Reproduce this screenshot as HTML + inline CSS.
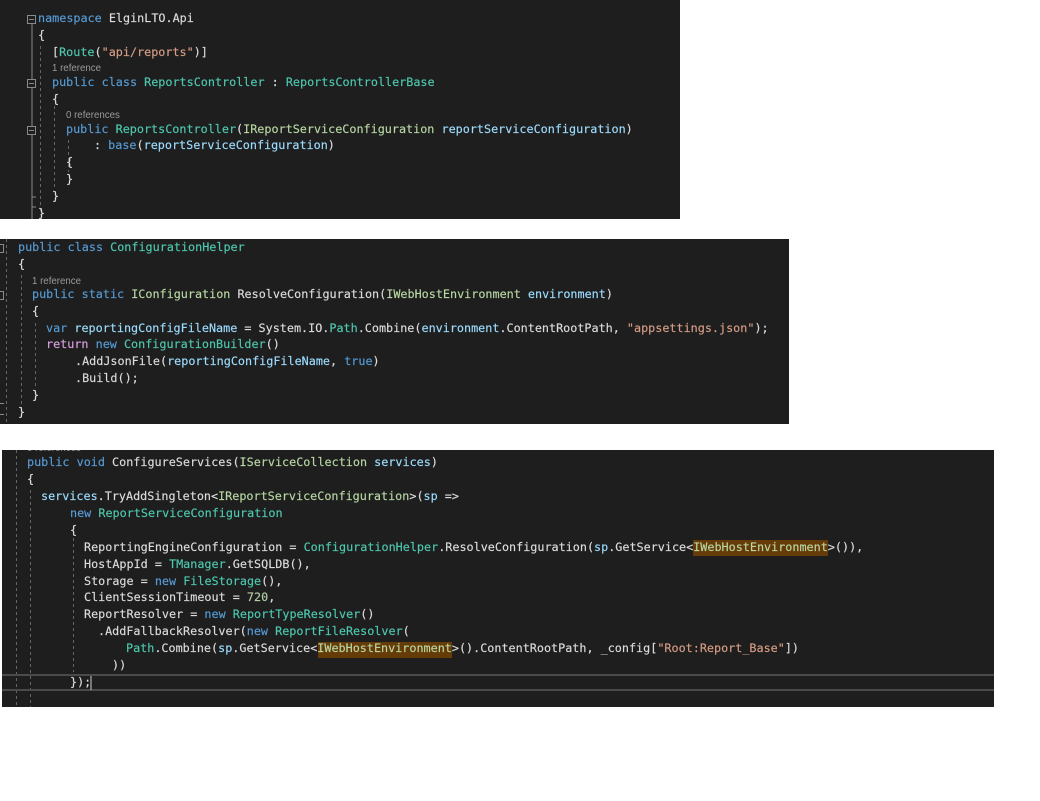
<!DOCTYPE html>
<html><head><meta charset="utf-8">
<style>
html,body{margin:0;padding:0;background:#fff;}
body{width:1040px;height:801px;position:relative;overflow:hidden;}
.p{position:absolute;background:#1e1e1e;overflow:hidden;}
.w{position:absolute;left:0;top:0;right:0;bottom:0;filter:blur(0.35px);}
.l{position:absolute;white-space:pre;font:11.78px/17px "DejaVu Sans Mono",monospace;color:#dcdcdc;margin-top:-.5px;-webkit-text-stroke:.15px}
.r{position:absolute;white-space:pre;font:9.7px/11px "Liberation Sans",sans-serif;color:#9a9a9a;}
.k{color:#569cd6}.t{color:#4ec9b0}.s{color:#d69d85}.a{color:#9cdcfe}.i{color:#b8d7a3}.c{color:#d8a0df}.n{color:#b5cea8}
svg{position:absolute;left:0;top:0;}
.h{position:absolute;background:#653b07;}
</style></head><body>

<div class="p" style="left:0;top:0;width:680px;height:219px">
<div class="w">
<svg width="680" height="219" fill="none">
<g stroke="#8a8a8a" stroke-width="1">
<rect x="27.5" y="15.5" width="8" height="8"/><path d="M29 19.5h5"/>
<rect x="27.5" y="79.5" width="8" height="8"/><path d="M29 83.5h5"/>
<rect x="27.5" y="126.5" width="8" height="8"/><path d="M29 130.5h5"/>
<path d="M32 24V79M32 88V126M32 135V197H36M32 197V207H36M32 207V219"/>
</g>
<g stroke="#666" stroke-width="1" stroke-dasharray="3 3">
<path d="M40.5 46V215M54.5 106V190M68.5 140V172"/>
</g>
</svg>
<div class="l" style="left:38px;top:10px"><span class="k">namespace</span> ElginLTO.Api</div>
<div class="l" style="left:38px;top:27px">{</div>
<div class="l" style="left:52px;top:44px">[<span class="t">Route</span>(<span class="s">"api/reports"</span>)]</div>
<div class="r" style="left:52px;top:63px">1 reference</div>
<div class="l" style="left:52px;top:74px"><span class="k">public</span> <span class="k">class</span> <span class="t">ReportsController</span> : <span class="t">ReportsControllerBase</span></div>
<div class="l" style="left:52px;top:91px">{</div>
<div class="r" style="left:66px;top:110px">0 references</div>
<div class="l" style="left:66px;top:121px"><span class="k">public</span> <span class="t">ReportsController</span>(<span class="i">IReportServiceConfiguration</span> <span class="a">reportServiceConfiguration</span>)</div>
<div class="l" style="left:94px;top:137px">: <span class="k">base</span>(<span class="a">reportServiceConfiguration</span>)</div>
<div class="l" style="left:66px;top:154px">{</div>
<div class="l" style="left:66px;top:171px">}</div>
<div class="l" style="left:52px;top:188px">}</div>
<div class="l" style="left:38px;top:205px">}</div>
</div></div>

<div class="p" style="left:0;top:239px;width:789px;height:185px">
<div class="w">
<svg width="789" height="185" fill="none">
<g stroke="#8a8a8a" stroke-width="1">
<path d="M0 5.5H3.5V13.5H0M0 52.5H3.5V60.5H0M0 164.5H4M0 175.5H4"/>
</g>
<g stroke="#666" stroke-width="1" stroke-dasharray="3 3">
<path d="M6.5 0V185M21.5 36V172M35.5 84V150"/>
</g>
</svg>
<div class="l" style="left:18px;top:0px"><span class="k">public</span> <span class="k">class</span> <span class="t">ConfigurationHelper</span></div>
<div class="l" style="left:18px;top:17px">{</div>
<div class="r" style="left:32px;top:37px">1 reference</div>
<div class="l" style="left:32px;top:47px"><span class="k">public</span> <span class="k">static</span> <span class="i">IConfiguration</span> ResolveConfiguration(<span class="i">IWebHostEnvironment</span> <span class="a">environment</span>)</div>
<div class="l" style="left:32px;top:64px">{</div>
<div class="l" style="left:46px;top:81px"><span class="k">var</span> <span class="a">reportingConfigFileName</span> = System.IO.<span class="t">Path</span>.Combine(<span class="a">environment</span>.ContentRootPath, <span class="s">"appsettings.json"</span>);</div>
<div class="l" style="left:46px;top:97px"><span class="c">return</span> <span class="k">new</span> <span class="t">ConfigurationBuilder</span>()</div>
<div class="l" style="left:75px;top:114px">.AddJsonFile(<span class="a">reportingConfigFileName</span>, <span class="k">true</span>)</div>
<div class="l" style="left:75px;top:131px">.Build();</div>
<div class="l" style="left:32px;top:148px">}</div>
<div class="l" style="left:18px;top:165px">}</div>
</div></div>

<div class="p" style="left:2px;top:450px;width:992px;height:257px">
<div class="w">
<svg width="992" height="257" fill="none">
<g stroke="#666" stroke-width="1" stroke-dasharray="3 3">
<path d="M14.5 0V257M28.5 40V257M71.5 76V222"/>
</g>
<path d="M0 225H992M0 240H992" stroke="#4a4a4a" stroke-width="2"/>
<path d="M89 226V240" stroke="#cfcfcf" stroke-width="1"/>
</svg>
<div class="h" style="left:691px;top:90px;width:135px;height:16px"></div>
<div class="h" style="left:316px;top:192px;width:134px;height:16px"></div>
<div class="r" style="left:25px;top:-7px">0 references</div>
<div class="l" style="left:25px;top:4px"><span class="k">public</span> <span class="k">void</span> ConfigureServices(<span class="i">IServiceCollection</span> <span class="a">services</span>)</div>
<div class="l" style="left:25px;top:21px">{</div>
<div class="l" style="left:39px;top:38px"><span class="a">services</span>.TryAddSingleton&lt;<span class="i">IReportServiceConfiguration</span>&gt;(<span class="a">sp</span> =&gt;</div>
<div class="l" style="left:68px;top:55px"><span class="k">new</span> <span class="t">ReportServiceConfiguration</span></div>
<div class="l" style="left:68px;top:72px">{</div>
<div class="l" style="left:82px;top:89px">ReportingEngineConfiguration = <span class="t">ConfigurationHelper</span>.ResolveConfiguration(<span class="a">sp</span>.GetService&lt;<span class="i">IWebHostEnvironment</span>&gt;()),</div>
<div class="l" style="left:82px;top:106px">HostAppId = <span class="t">TManager</span>.GetSQLDB(),</div>
<div class="l" style="left:82px;top:123px">Storage = <span class="k">new</span> <span class="t">FileStorage</span>(),</div>
<div class="l" style="left:82px;top:139px">ClientSessionTimeout = <span class="n">720</span>,</div>
<div class="l" style="left:82px;top:156px">ReportResolver = <span class="k">new</span> <span class="t">ReportTypeResolver</span>()</div>
<div class="l" style="left:96px;top:173px">.AddFallbackResolver(<span class="k">new</span> <span class="t">ReportFileResolver</span>(</div>
<div class="l" style="left:124px;top:190px"><span class="t">Path</span>.Combine(<span class="a">sp</span>.GetService&lt;<span class="i">IWebHostEnvironment</span>&gt;().ContentRootPath, _config[<span class="s">"Root:Report_Base"</span>])</div>
<div class="l" style="left:110px;top:207px">))</div>
<div class="l" style="left:68px;top:224px">});</div>
</div></div>

</body></html>
